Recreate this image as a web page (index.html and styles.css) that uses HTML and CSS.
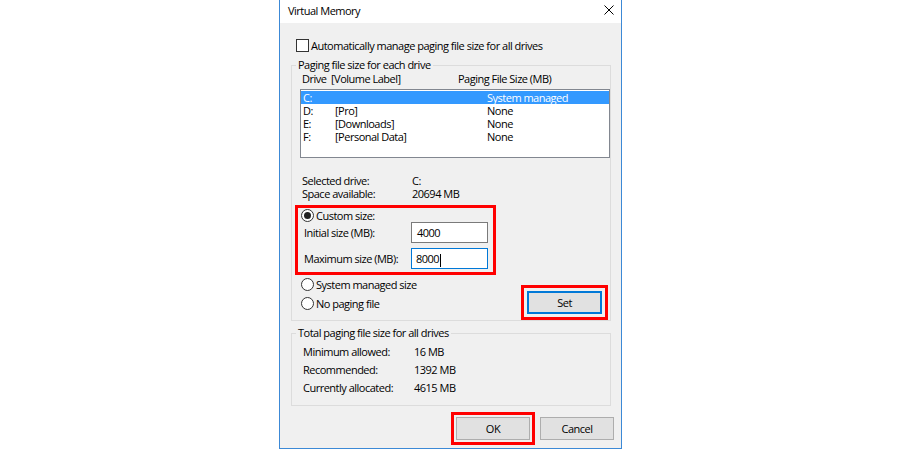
FILE: index.html
```html
<!DOCTYPE html>
<html lang="en">
<head>
    <meta charset="UTF-8">
    <title>Virtual Memory</title>
    <link rel="stylesheet" href="styles.css">
</head>
<body>
<div class="window">
    <!--标题栏-->
    <div class="titlebar">
        <span class="title">Virtual Memory</span>
        <svg class="close" width="10" height="10" viewBox="0 0 10 10">
            <path d="M0.5 0.5 L9.5 9.5 M9.5 0.5 L0.5 9.5" stroke="#000" stroke-width="1" fill="none"/>
        </svg>
    </div>

    <div class="content">
        <div class="check-row"><span class="checkbox"></span>Automatically manage paging file size for all drives</div>

        <fieldset class="group">
            <legend>Paging file size for each drive</legend>
            <div class="list-head">
                <span class="col-drive">Drive</span>
                <span class="col-label">[Volume Label]</span>
                <span>Paging File Size (MB)</span>
            </div>
            <div class="listbox">
                <div class="row selected"><span class="c1">C:</span><span class="c2"></span><span>System managed</span></div>
                <div class="row"><span class="c1">D:</span><span class="c2">[Pro]</span><span>None</span></div>
                <div class="row"><span class="c1">E:</span><span class="c2">[Downloads]</span><span>None</span></div>
                <div class="row"><span class="c1">F:</span><span class="c2">[Personal Data]</span><span>None</span></div>
            </div>

            <div class="info">
                <div class="info-row"><span class="info-label">Selected drive:</span><span>C:</span></div>
                <div class="info-row"><span class="info-label">Space available:</span><span>20694 MB</span></div>
            </div>

            <div class="highlight custom">
                <div class="radio-row"><span class="radio checked"></span>Custom size:</div>
                <div class="field-row">
                    <span class="field-label">Initial size (MB):</span>
                    <span class="input">4000</span>
                </div>
                <div class="field-row">
                    <span class="field-label">Maximum size (MB):</span>
                    <span class="input focus">8000<i class="caret"></i></span>
                </div>
            </div>

            <div class="bottom-row">
                <div class="radios">
                    <div class="radio-row"><span class="radio"></span>System managed size</div>
                    <div class="radio-row"><span class="radio"></span>No paging file</div>
                </div>
                <div class="highlight set-box"><button class="btn focus">Set</button></div>
            </div>
        </fieldset>

        <fieldset class="group group-total">
            <legend>Total paging file size for all drives</legend>
            <div class="totals">
                <div class="info-row"><span class="total-label">Minimum allowed:</span><span>16 MB</span></div>
                <div class="info-row"><span class="total-label">Recommended:</span><span>1392 MB</span></div>
                <div class="info-row"><span class="total-label">Currently allocated:</span><span>4615 MB</span></div>
            </div>
        </fieldset>

        <div class="actions">
            <div class="highlight ok-box"><button class="btn">OK</button></div>
            <button class="btn cancel">Cancel</button>
        </div>
    </div>
</div>
</body>
</html>
```
FILE: styles.css
```css
* {
    padding: 0;
    margin: 0;
}

body {
    background: #fff;
    font-family: "Open Sans", "Noto Sans", sans-serif;
    font-size: 11px;
    letter-spacing: -0.5px;
    color: #000;
}

.window {
    width: 343px;
    height: 449px;
    box-sizing: border-box;
    margin-left: 279px;
    border: 1px solid #3c89d6;
    border-top: 0;
    background: #f0f0f0;
    display: flex;
    flex-direction: column;
}

.titlebar {
    height: 23px;
    background: #fff;
    display: flex;
    align-items: center;
    justify-content: space-between;
    padding: 0 7px 0 8px;
}

.title {
    margin-top: -2px;
}

.close {
    margin-top: -3px;
}

.content {
    flex: 1;
    padding: 15px 10px 0 11px;
}

.check-row {
    display: flex;
    align-items: center;
    height: 14px;
    margin-left: 5px;
}

.checkbox {
    width: 13px;
    height: 13px;
    box-sizing: border-box;
    border: 1px solid #333;
    background: #fff;
    margin-right: 2px;
}

.group {
    margin-top: 6px;
    border: 1px solid #dcdcdc;
    min-width: 0;
}

.group legend {
    margin-left: 4px;
    padding: 0 2px;
    line-height: 14px;
}

.list-head {
    display: flex;
    line-height: 13px;
    padding-left: 10px;
}

.col-drive {
    width: 29px;
}

.col-label {
    width: 127px;
}

.listbox {
    margin: 4px 0 0 8px;
    width: 310px;
    height: 69px;
    box-sizing: border-box;
    border: 1px solid #828790;
    background: #fff;
    padding-top: 1px;
}

.row {
    display: flex;
    height: 13px;
    line-height: 13px;
    padding-left: 2px;
}

.row.selected {
    background: #3399ff;
    color: #fff;
}

.c1 {
    width: 32px;
}

.c2 {
    width: 152px;
}

.info {
    margin: 16px 0 0 10px;
    line-height: 13px;
}

.info-row {
    display: flex;
}

.info-label {
    width: 110px;
}

.highlight {
    border: 3px solid #f00;
}

.custom {
    margin: 5px 0 0 3px;
    width: 201px;
    box-sizing: border-box;
    padding: 1px 5px 3px 0;
}

.radio-row {
    display: flex;
    align-items: center;
    height: 13px;
}

.custom .radio-row {
    padding-left: 3px;
}

.radio {
    width: 13px;
    height: 13px;
    box-sizing: border-box;
    border: 1px solid #333;
    border-radius: 50%;
    background: #fff;
    margin-right: 2px;
    position: relative;
}

.radio.checked::after {
    content: "";
    position: absolute;
    left: 2px;
    top: 2px;
    width: 7px;
    height: 7px;
    border-radius: 50%;
    background: #222;
}

.field-row {
    display: flex;
    align-items: center;
    height: 21px;
    padding-left: 6px;
}

.field-row + .field-row {
    margin-top: 5px;
}

.field-label {
    width: 107px;
}

.input {
    width: 77px;
    height: 21px;
    box-sizing: border-box;
    border: 1px solid #7a7a7a;
    background: #fff;
    padding-left: 5px;
    line-height: 19px;
}

.input.focus {
    border-color: #0078d7;
    padding-left: 4px;
}

.caret {
    display: inline-block;
    width: 1px;
    height: 13px;
    background: #000;
    vertical-align: middle;
    margin-left: 1px;
}

.bottom-row {
    display: flex;
    justify-content: space-between;
    align-items: flex-start;
}

.radios {
    padding: 2px 0 0 9px;
}

.radios .radio-row {
    height: 14px;
}

.radios .radio-row + .radio-row {
    margin-top: 5px;
}

.set-box {
    margin: 10px 2px 0 0;
    padding: 3px;
}

.btn {
    display: block;
    width: 75px;
    height: 23px;
    box-sizing: border-box;
    background: #e1e1e1;
    border: 1px solid #adadad;
    font: inherit;
    letter-spacing: inherit;
    color: #000;
}

.btn.focus {
    border: 2px solid #0078d7;
}

.group-total {
    margin-top: 5px;
}

.totals {
    padding: 3px 0 8px 11px;
    line-height: 18px;
}

.total-label {
    width: 111px;
}

.actions {
    display: flex;
    justify-content: flex-end;
    align-items: center;
    margin: 6px -3px 0 0;
}

.ok-box {
    padding: 2px;
}

.ok-box .btn {
    width: 74px;
}

.cancel {
    width: 74px;
    margin-left: 5px;
}
```
